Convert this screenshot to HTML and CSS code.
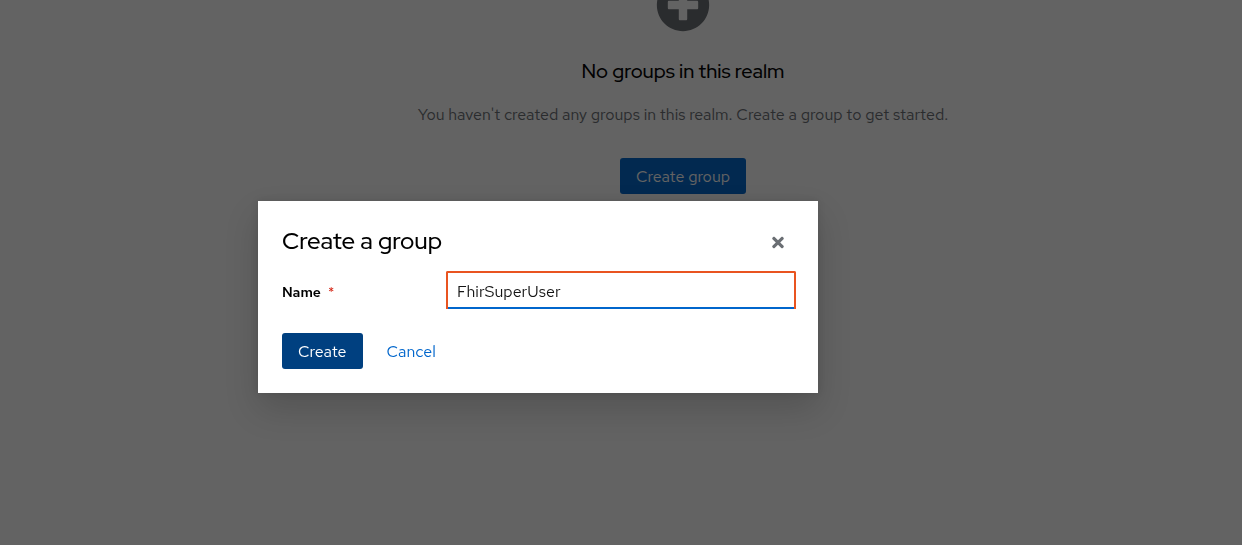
FILE: index.html
```html
<!DOCTYPE html>
<html lang="en">
<head>
<meta charset="utf-8">
<meta name="viewport" content="width=device-width, initial-scale=1">
<title>Groups</title>
<link rel="stylesheet" href="styles.css">
</head>
<body>
<main class="page">
  <section class="empty-state">
    <svg class="empty-state-icon" viewBox="0 0 512 512" aria-hidden="true"><path d="M256 8C119 8 8 119 8 256s111 248 248 248 248-111 248-248S393 8 256 8zm144 276c0 6.600-5.400 12-12 12h-92v92c0 6.600-5.400 12-12 12h-56c-6.600 0-12-5.400-12-12v-92h-92c-6.600 0-12-5.400-12-12v-56c0-6.600 5.400-12 12-12h92v-92c0-6.600 5.400-12 12-12h56c6.600 0 12 5.400 12 12v92h92c6.600 0 12 5.400 12 12v56z"/></svg>
    <h1 class="empty-state-title">No groups in this realm</h1>
    <p class="empty-state-body">You haven't created any groups in this realm. Create a group to get started.</p>
    <button class="button button-primary" type="button">Create group</button>
  </section>
</main>
<div class="backdrop">
  <div class="modal" role="dialog" aria-modal="true" aria-labelledby="modal-title">
    <header class="modal-header">
      <h2 class="modal-title" id="modal-title">Create a group</h2>
      <button class="modal-close" type="button" aria-label="Close">
        <svg class="modal-close-icon" viewBox="0 0 352 512" aria-hidden="true"><path d="M242.720 256l100.070-100.070c12.280-12.280 12.280-32.190 0-44.480l-22.240-22.240c-12.280-12.280-32.190-12.280-44.480 0L176 189.280 75.930 89.210c-12.280-12.280-32.190-12.280-44.480 0L9.210 111.450c-12.280 12.280-12.280 32.190 0 44.480L109.280 256 9.210 356.070c-12.280 12.280-12.280 32.190 0 44.480l22.240 22.240c12.280 12.280 32.200 12.280 44.480 0L176 322.720l100.070 100.070c12.280 12.280 32.200 12.280 44.480 0l22.240-22.240c12.280-12.280 12.280-32.190 0-44.480L242.720 256z"/></svg>
      </button>
    </header>
    <form class="form">
      <div class="form-row">
        <label class="form-label" for="group-name">Name <span class="required" aria-hidden="true">*</span></label>
        <div class="field"><input class="field-input" id="group-name" type="text" value="FhirSuperUser" required></div>
      </div>
      <div class="actions">
        <button class="button button-primary button-active" type="button">Create</button>
        <button class="button button-link" type="button">Cancel</button>
      </div>
    </form>
  </div>
</div>
</body>
</html>
```
FILE: styles.css
```css
* { box-sizing: border-box; }

body {
  margin: 0;
  background: #fff;
  color: #151515;
  font-family: "Red Hat Text", Inter, "Liberation Sans", sans-serif;
  font-size: 16px;
  line-height: 24px;
  overflow: hidden;
}

.page { padding-left: 124px; }

.empty-state {
  display: flex;
  flex-direction: column;
  align-items: center;
  margin-top: -22px;
  text-align: center;
}

.empty-state-icon {
  width: 54px;
  height: 54px;
  fill: #6a6e73;
}

.empty-state-title {
  margin: 24px 0 0;
  color: #000;
  font-family: "Red Hat Display", "Red Hat Text", Inter, sans-serif;
  font-size: 20px;
  font-weight: 500;
  line-height: 30px;
}

.empty-state-body {
  margin: 17px 0 31px;
  color: #6a6e73;
}

.button {
  height: 36px;
  padding: 2px 16px 0;
  border: 0;
  border-radius: 3px;
  font: inherit;
  cursor: pointer;
}

.button-primary { background: #06c; color: #fff; }
.button-active { background: #004080; }
.button-link { background: none; color: #06c; }

.backdrop {
  position: fixed;
  inset: 0;
  display: flex;
  align-items: center;
  justify-content: center;
  padding: 49px 166px 0 0;
  background: rgba(3, 3, 3, 0.62);
}

.modal {
  width: 100%;
  max-width: 560px;
  padding: 24px;
  background: #fff;
  box-shadow: 0 16px 32px rgba(3, 3, 3, 0.16), 0 0 8px rgba(3, 3, 3, 0.1);
}

.modal-header {
  display: flex;
  align-items: flex-start;
  justify-content: space-between;
  height: 34px;
}

.modal-title {
  margin: 0;
  color: #000;
  font-family: "Red Hat Display", "Red Hat Text", Inter, sans-serif;
  font-size: 24px;
  font-weight: 500;
  line-height: 32px;
}

.modal-close {
  display: flex;
  padding: 9px 10px 8px;
  border: 0;
  background: none;
  cursor: pointer;
}

.modal-close-icon {
  width: 12px;
  height: 17px;
  fill: #6a6e73;
}

.form-row {
  display: grid;
  grid-template-columns: 164px 1fr;
  align-items: center;
  margin: 12px -2px 24px 0;
}

.form-label {
  padding-top: 4px;
  color: #000;
  font-size: 14px;
  font-weight: 600;
}

.required {
  margin-left: 4px;
  color: #d62a1a;
  font-weight: 400;
}

.field {
  display: flex;
  border: 2px solid #e95420;
  border-bottom: 0;
  border-radius: 2px 2px 0 0;
}

.field-input {
  width: 100%;
  height: 36px;
  padding: 2px 9px 0;
  border: 0;
  border-bottom: 2px solid #06c;
  outline: 0;
  background: #fff;
  color: #151515;
  font: inherit;
}

.actions { display: flex; gap: 8px; }
```
